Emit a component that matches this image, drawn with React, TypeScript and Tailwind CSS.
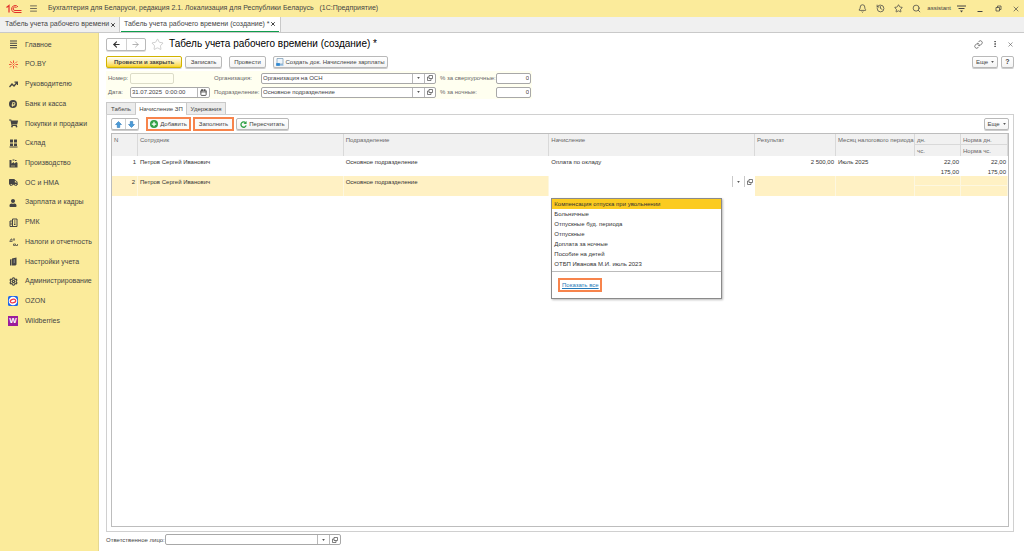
import type { ReactNode } from "react";
import {
  ArrowLeft,
  ArrowRight,
  Bell,
  Calendar,
  EllipsisVertical,
  History,
  Link,
  Menu,
  Search,
  Settings,
  Star,
  X,
} from "lucide-react";
import { FaRubleSign, FaShoppingCart, FaTruck, FaUser } from "react-icons/fa";

const PressButton = ({
  children,
  className = "",
  label,
}: {
  children: ReactNode;
  className?: string;
  label?: string;
}) => (
  <button
    type="button"
    aria-label={label}
    className={`flex h-3 items-center justify-center rounded-[2px] border border-[#b9b9b9] bg-gradient-to-b from-white to-[#f4f4f4] whitespace-nowrap shadow-[0_1px_0_#cccccc] ${className}`}
  >
    {children}
  </button>
);

const Caret = () => (
  <svg viewBox="0 0 4 3" className="h-[2px] w-[3px] shrink-0" fill="#555555">
    <path d="M0 0h4L2 3z" />
  </svg>
);

const OpenIcon = () => (
  <svg viewBox="0 0 12 12" className="h-1.5 w-1.5 shrink-0" fill="none" stroke="#555555" strokeWidth="1.5">
    <path d="M4 1h7v6H4zM4 4H1v7h7V7" />
  </svg>
);

type PickerProps = {
  id: string;
  label: string;
  value: string;
  className?: string;
};

const Picker = ({ id, label, value, className = "" }: PickerProps) => (
  <div className={`flex h-[11px] rounded-[2px] border border-[#a8a8a8] bg-white ${className}`}>
    <input id={id} defaultValue={value} className="min-w-0 flex-1 px-px outline-none" />
    <button
      type="button"
      aria-label={`${label}: выбрать`}
      className="flex w-3 items-center justify-center border-l border-[#b8b8b8]"
    >
      <Caret />
    </button>
    <button
      type="button"
      aria-label={`${label}: открыть`}
      className="flex w-[11px] items-center justify-center border-l border-[#b8b8b8]"
    >
      <OpenIcon />
    </button>
  </div>
);

const Logo = () => (
  <svg viewBox="0 0 32 20" className="h-[10px] w-4" fill="none" stroke="#e2302c">
    <path d="M1 7l5-4v14" strokeWidth="2.500" />
    <path d="M24 6a7 7 0 1 0-6 11h13" strokeWidth="2" />
    <path d="M21 8a3.500 3.500 0 1 0-3 5h13" strokeWidth="2" />
  </svg>
);

const TopBar = () => (
  <header className="flex h-[17px] shrink-0 items-center bg-[#fbeb9b] pr-1 pl-1.5 text-[#444444]">
    <Logo />
    <button type="button" aria-label="Меню" className="ml-[7px]">
      <Menu className="h-[9px] w-[9px]" strokeWidth={2} />
    </button>
    <span className="ml-[10px] flex-1 truncate text-[7px] whitespace-pre">
      Бухгалтерия для Беларуси, редакция 2.1. Локализация для Республики Беларусь   (1С:Предприятие)
    </span>
    <div className="flex items-center gap-[9px]">
      <button type="button" aria-label="Уведомления">
        <Bell className="h-[9px] w-[9px]" />
      </button>
      <button type="button" aria-label="История">
        <History className="h-[9px] w-[9px]" />
      </button>
      <button type="button" aria-label="Избранное">
        <Star className="h-[9px] w-[9px]" />
      </button>
      <button type="button" aria-label="Поиск">
        <Search className="h-[9px] w-[9px]" />
      </button>
    </div>
    <span className="ml-1.5 text-[6px]">assistant</span>
    <button type="button" aria-label="Настройки окна" className="ml-1.5">
      <svg viewBox="0 0 18 16" className="h-2 w-[9px]" fill="none" stroke="#444444" strokeWidth="2">
        <path d="M0 2h18M3 7h12" />
        <path d="M6 11h6l-3 4z" fill="#444444" stroke="none" />
      </svg>
    </button>
    <button type="button" aria-label="Свернуть" className="ml-[11px]">
      <svg viewBox="0 0 14 16" className="h-2 w-[7px]" stroke="#444444" strokeWidth="2">
        <path d="M1 13h10" />
      </svg>
    </button>
    <button type="button" aria-label="Развернуть" className="ml-[11px]">
      <svg viewBox="0 0 14 14" className="h-[7px] w-[7px]" fill="none" stroke="#444444" strokeWidth="1.500">
        <path d="M5 5V2h7v7H9M2 5h7v7H2z" />
      </svg>
    </button>
    <button type="button" aria-label="Закрыть" className="ml-2.5">
      <X className="h-2 w-2" />
    </button>
  </header>
);

const WindowTabs = () => (
  <nav className="flex h-4 shrink-0 border-b border-[#c9c9c9] bg-[#f0f0f0] text-[7px] text-[#444444]">
    <div className="flex w-[120px] items-center justify-between border-r border-[#c9c9c9] pr-[3px] pl-[5px] whitespace-nowrap">
      <a href="#timesheets">Табель учета рабочего времени</a>
      <button type="button" aria-label="Закрыть вкладку">
        <X className="h-1.5 w-1.5" strokeWidth={4} />
      </button>
    </div>
    <div className="flex w-[161px] border-r border-[#c9c9c9] bg-white px-px">
      <div className="flex flex-1 items-center justify-between border-b border-[#0f9d4c] px-[3px] whitespace-nowrap">
        <a href="#new-timesheet">Табель учета рабочего времени (создание) *</a>
        <button type="button" aria-label="Закрыть вкладку">
          <X className="h-1.5 w-1.5" strokeWidth={4} />
        </button>
      </div>
    </div>
  </nav>
);

const sections: { name: string; icon: ReactNode }[] = [
  {
    name: "Главное",
    icon: (
      <svg viewBox="0 0 18 18" className="h-[9px] w-[9px]" stroke="currentColor" strokeWidth="2">
        <path d="M2 2h14M2 6.500h14M2 11h14M2 15.500h14" />
      </svg>
    ),
  },
  {
    name: "РО.BY",
    icon: (
      <svg viewBox="0 0 18 18" className="h-[9px] w-[9px]" stroke="#f0553a" strokeWidth="2" fill="none">
        <path d="M9 1v5M9 12v5M2 3l4 3M13 12l3 3M16 3l-3 3M5 12l-3 3M0 9h5M13 9h5M7 7l4 4M11 7l-4 4" />
      </svg>
    ),
  },
  {
    name: "Руководителю",
    icon: (
      <svg viewBox="0 0 18 18" className="h-[9px] w-[9px]" fill="none" stroke="currentColor" strokeWidth="2.500">
        <path d="M1 14l5-6 4 4 6-7M11 4h6v6" />
      </svg>
    ),
  },
  {
    name: "Банк и касса",
    icon: (
      <span className="flex h-2 w-2 items-center justify-center rounded-full bg-[#444444]">
        <FaRubleSign className="h-[5px] w-[5px] text-[#fbeb9b]" />
      </span>
    ),
  },
  { name: "Покупки и продажи", icon: <FaShoppingCart className="h-[9px] w-[9px]" /> },
  {
    name: "Склад",
    icon: (
      <svg viewBox="0 0 18 18" className="h-[9px] w-[9px]" fill="currentColor">
        <path d="M2 1h6v6H2zM10 1h6v6h-6zM2 9h6v5H2zM10 9h6v5h-6zM1 15h16v2H1z" />
      </svg>
    ),
  },
  {
    name: "Производство",
    icon: (
      <svg viewBox="0 0 18 18" className="h-[9px] w-[9px]" fill="currentColor">
        <path d="M1 17V2h4v7l5-3v3l5-3 2 2v9zM7 1h4v2H7zM12 2h3v2h-3z" />
        <path d="M5 13h2v2H5zM9 13h2v2H9z" fill="#fbeb9b" />
      </svg>
    ),
  },
  { name: "ОС и НМА", icon: <FaTruck className="h-[9px] w-[9px]" /> },
  { name: "Зарплата и кадры", icon: <FaUser className="h-2 w-2" /> },
  {
    name: "РМК",
    icon: (
      <svg viewBox="0 0 18 18" className="h-[9px] w-[9px]" fill="none" stroke="currentColor" strokeWidth="2">
        <path d="M2 6h5v11H2zM7 2h9v15H7zM10 6h3M10 10h3M10 13h3M4 9v5" />
      </svg>
    ),
  },
  {
    name: "Налоги и отчетность",
    icon: (
      <svg viewBox="0 0 18 18" className="h-[9px] w-[9px]" fill="none" stroke="currentColor" strokeWidth="1.500">
        <path d="M1 7h6M2 6l2-4h2v4M8 2h4M10 2v4M9 12v3h4v-3zM14 15h3v-3" />
      </svg>
    ),
  },
  {
    name: "Настройки учета",
    icon: (
      <svg viewBox="0 0 18 18" className="h-[9px] w-[9px]" fill="currentColor">
        <path d="M2 5l3-1v13H2zM6 3l9-2v14l-2 2H6z" />
        <path d="M9 5l3-1v8l-3 1z" fill="#777777" />
      </svg>
    ),
  },
  { name: "Администрирование", icon: <Settings className="h-[9px] w-[9px]" strokeWidth={3} /> },
  {
    name: "OZON",
    icon: (
      <svg viewBox="0 0 20 20" className="h-2.5 w-2.5">
        <rect width="20" height="20" rx="3" fill="#1f66ea" />
        <circle cx="10" cy="10" r="8.500" fill="#ffffff" />
        <ellipse
          cx="10"
          cy="10"
          rx="5.500"
          ry="3.500"
          fill="#ffffff"
          stroke="#f0394a"
          strokeWidth="2.500"
          transform="rotate(-15 10 10)"
        />
      </svg>
    ),
  },
  {
    name: "Wildberries",
    icon: (
      <span className="flex h-2.5 w-2.5 items-center justify-center bg-[#9b1c9b] text-[8px] leading-none font-bold text-white">
        W
      </span>
    ),
  },
];

const Sidebar = () => (
  <aside className="w-[99px] shrink-0 border-r border-[#e5d891] bg-[#fbeb9b] pt-[2px] text-[7px] text-[#444444]">
    <ul className="grid h-[296px] auto-rows-fr">
      {sections.map((section) => (
        <li key={section.name} className="flex items-center">
          <a href="#section" className="flex items-center gap-[7px] pl-2 whitespace-nowrap">
            <span className="flex w-2.5 justify-center">{section.icon}</span>
            {section.name}
          </a>
        </li>
      ))}
    </ul>
  </aside>
);

const FormHeader = () => (
  <div className="flex h-[19px] items-center pt-[3px]">
    <div className="flex h-[13px] w-10 rounded-[2px] border border-[#b9b9b9] bg-white shadow-[0_1px_0_#dddddd]">
      <button type="button" aria-label="Назад" className="flex flex-1 items-center justify-center border-r border-[#d0d0d0]">
        <ArrowLeft className="h-[9px] w-[9px] text-[#333333]" strokeWidth={3} />
      </button>
      <button type="button" aria-label="Вперед" className="flex flex-1 items-center justify-center">
        <ArrowRight className="h-[9px] w-[9px] text-[#999999]" />
      </button>
    </div>
    <button type="button" aria-label="В избранное" className="ml-[5px]">
      <Star className="h-[13px] w-[13px] text-[#aaaaaa]" strokeWidth={1} />
    </button>
    <h1 className="ml-[5px] flex-1 text-[10px] whitespace-nowrap text-black">Табель учета рабочего времени (создание) *</h1>
    <div className="flex items-center gap-2 text-[#555555]">
      <button type="button" aria-label="Ссылка">
        <Link className="h-[9px] w-[9px]" />
      </button>
      <button type="button" aria-label="Еще действия">
        <EllipsisVertical className="h-2 w-2" strokeWidth={3} />
      </button>
      <button type="button" aria-label="Закрыть форму">
        <X className="h-[7px] w-[7px]" />
      </button>
    </div>
  </div>
);

const CommandBar = () => (
  <div className="mt-1 flex items-center">
    <PressButton className="w-[76px] border-[#d1b300] from-[#ffe200] to-[#fbd500] font-bold">Провести и закрыть</PressButton>
    <PressButton className="ml-[3px] w-[37px]">Записать</PressButton>
    <PressButton className="ml-[7px] w-[37px]">Провести</PressButton>
    <PressButton className="ml-[7px] w-[115px] gap-px">
      <svg viewBox="0 0 16 16" className="h-2 w-2 shrink-0" fill="none">
        <path d="M2 1h12v11H2z" fill="#eef5fb" stroke="#7d9db8" strokeWidth="1.500" />
        <path d="M1 11h6v4H1zM7 14h8" fill="#2e87d0" stroke="#2e87d0" strokeWidth="1.500" />
      </svg>
      Создать док. Начисление зарплаты
    </PressButton>
    <PressButton className="ml-auto w-[26px] gap-[3px]">
      Еще <Caret />
    </PressButton>
    <PressButton className="ml-[3px] w-[13px] text-[7px] font-bold" label="Справка">
      ?
    </PressButton>
  </div>
);

const DocumentFields = () => (
  <div className="mt-[3px] grid w-[426px] auto-rows-[14px] grid-cols-[24px_80px_51px_175px_60px_35px] items-center bg-[#fffff0] text-[#666666]">
    <label htmlFor="number" className="pl-[2px]">Номер:</label>
    <input id="number" className="h-[11px] w-11 rounded-[2px] border border-[#dcdcc8] bg-[#fffff0]" />
    <label htmlFor="org" className="pl-1">Организация:</label>
    <Picker id="org" label="Организация" value="Организация на ОСН" className="text-[#444444]" />
    <label htmlFor="overtime" className="pl-1 whitespace-nowrap">% за сверхурочные:</label>
    <input id="overtime" defaultValue="0" className="h-[11px] w-full rounded-[2px] border border-[#a8a8a8] bg-white px-px text-right text-[#444444]" />
    <label htmlFor="date" className="pl-[2px]">Дата:</label>
    <div className="flex h-[11px] rounded-[2px] border border-[#a8a8a8] bg-white text-[#444444]">
      <input id="date" defaultValue="31.07.2025  0:00:00" className="min-w-0 flex-1 px-px outline-none" />
      <button type="button" aria-label="Календарь" className="flex w-3 items-center justify-center border-l border-[#b8b8b8]">
        <Calendar className="h-[7px] w-[7px]" strokeWidth={3} />
      </button>
    </div>
    <label htmlFor="department" className="pl-1 whitespace-nowrap">Подразделение:</label>
    <Picker id="department" label="Подразделение" value="Основное подразделение" className="text-[#444444]" />
    <label htmlFor="night" className="pl-1 whitespace-nowrap">% за ночные:</label>
    <input id="night" defaultValue="0" className="h-[11px] w-full rounded-[2px] border border-[#a8a8a8] bg-white px-px text-right text-[#444444]" />
  </div>
);

const PageTabs = () => (
  <div role="tablist" className="mt-[3px] flex h-3 items-stretch whitespace-nowrap">
    <button type="button" role="tab" aria-selected="false" className="w-[30px] border border-b-0 border-[#c9c9c9] bg-[#ececec]">
      Табель
    </button>
    <button type="button" role="tab" aria-selected="true" className="z-10 -mb-px w-[50px] border-t border-[#c9c9c9] bg-white">
      Начисление ЗП
    </button>
    <button type="button" role="tab" aria-selected="false" className="w-10 border border-b-0 border-[#c9c9c9] bg-[#ececec]">
      Удержания
    </button>
  </div>
);

const TableToolbar = () => (
  <div className="flex h-3.5 items-center">
    <div className="flex h-3 w-7 rounded-[2px] border border-[#b9b9b9] shadow-[0_1px_0_#cccccc]">
      <button type="button" aria-label="Вверх" className="flex flex-1 items-center justify-center border-r border-[#d0d0d0]">
        <svg viewBox="0 0 14 14" className="h-[7px] w-[7px]" fill="#4a9bd8" stroke="#1f6fb0" strokeWidth="1">
          <path d="M7 1l6 6h-3.500v6h-5V7H1z" />
        </svg>
      </button>
      <button type="button" aria-label="Вниз" className="flex flex-1 items-center justify-center">
        <svg viewBox="0 0 14 14" className="h-[7px] w-[7px]" fill="#4a9bd8" stroke="#1f6fb0" strokeWidth="1">
          <path d="M7 13l6-6h-3.500V1h-5v6H1z" />
        </svg>
      </button>
    </div>
    <button
      type="button"
      className="ml-[7px] flex h-3.5 w-[45px] items-center justify-center gap-[2px] border-2 border-[#f7844c] bg-[#fafafa]"
    >
      <svg viewBox="0 0 16 16" className="h-2 w-2 shrink-0">
        <circle cx="8" cy="8" r="8" fill="#2fa044" />
        <path d="M8 3.500v9M3.500 8h9" stroke="#ffffff" strokeWidth="2.500" />
      </svg>
      Добавить
    </button>
    <button type="button" className="ml-[2px] h-3.5 w-[41px] border-2 border-[#f7844c] bg-[#fafafa]">
      Заполнить
    </button>
    <PressButton className="ml-[2px] w-[53px] gap-[2px]">
      <svg viewBox="0 0 16 16" className="h-[7px] w-[7px] shrink-0" fill="none" stroke="#2fa044" strokeWidth="3">
        <path d="M13 4.500A6 6 0 1 0 14 10" />
        <path d="M15 0v7H8z" fill="#2fa044" stroke="none" />
      </svg>
      Пересчитать
    </PressButton>
    <PressButton className="ml-auto w-[25px] gap-[3px]">
      Еще <Caret />
    </PressButton>
  </div>
);

const accruals = [
  "Компенсация отпуска при увольнении",
  "Больничные",
  "Отпускные буд. периода",
  "Отпускные",
  "Доплата за ночные",
  "Пособие на детей",
  "ОТБП Иванова М.И. июль 2023",
];

const AccrualMenu = () => (
  <div className="absolute top-[22px] left-[2px] z-20 w-[171px] border border-[#8a8a8a] bg-white shadow-[1px_1px_2px_#bbbbbb]">
    <ul>
      {accruals.map((name, index) => (
        <li key={name}>
          <button
            type="button"
            className={`block h-2.5 w-full px-[2px] text-left whitespace-nowrap ${index === 0 ? "bg-[#fbcb20]" : ""}`}
          >
            {name}
          </button>
        </li>
      ))}
    </ul>
    <div className="mt-[2px] flex border-t border-[#bbbbbb] px-1.5 pt-1.5 pb-1.5">
      <a
        href="#all"
        className="flex h-3.5 w-11 items-center justify-center border-2 border-[#f7844c] whitespace-nowrap text-[#2479b8] underline"
      >
        Показать все
      </a>
    </div>
  </div>
);

const head = "border-r border-[#d9d9d9] px-[2px] pt-[2px] text-left align-top font-normal text-[#666666]";
const cell = "px-[2px] pt-[2px] align-top";
const active = "border-r border-[#fdf7e0] px-[2px] pt-[2px] align-top";

const AccrualTable = () => (
  <div className="mt-[2px] min-h-0 flex-1 border border-[#bdbdbd] bg-white">
    <table className="w-full table-fixed border-separate border-spacing-0">
      <colgroup>
        <col className="w-[26px]" />
        <col />
        <col />
        <col />
        <col className="w-[81px]" />
        <col className="w-[79px]" />
        <col className="w-[46px]" />
        <col className="w-[47px]" />
      </colgroup>
      <thead className="bg-[#f1f1f1]">
        <tr className="h-[11px]">
          <th rowSpan={2} className={head}>N</th>
          <th rowSpan={2} className={head}>Сотрудник</th>
          <th rowSpan={2} className={head}>Подразделение</th>
          <th rowSpan={2} className={head}>Начисление</th>
          <th rowSpan={2} className={head}>Результат</th>
          <th rowSpan={2} className={`${head} whitespace-nowrap`}>Месяц налогового периода</th>
          <th className={`${head} border-b`}>дн.</th>
          <th className={`${head} border-b`}>Норма дн.</th>
        </tr>
        <tr className="h-[11px]">
          <th className={head}>чс.</th>
          <th className={head}>Норма чс.</th>
        </tr>
      </thead>
      <tbody className="text-[#333333]">
        <tr className="h-2.5">
          <td rowSpan={2} className={`${cell} text-right`}>1</td>
          <td rowSpan={2} className={cell}>Петров Сергей Иванович</td>
          <td rowSpan={2} className={cell}>Основное подразделение</td>
          <td rowSpan={2} className={cell}>Оплата по окладу</td>
          <td rowSpan={2} className={`${cell} text-right`}>2 500,00</td>
          <td rowSpan={2} className={cell}>Июль 2025</td>
          <td className={`${cell} text-right`}>22,00</td>
          <td className={`${cell} text-right`}>22,00</td>
        </tr>
        <tr className="h-2.5">
          <td className={`${cell} text-right`}>175,00</td>
          <td className={`${cell} text-right`}>175,00</td>
        </tr>
        <tr className="h-2.5 bg-[#fff1c4]">
          <td rowSpan={2} className={`${active} text-right`}>2</td>
          <td rowSpan={2} className={active}>Петров Сергей Иванович</td>
          <td rowSpan={2} className={active}>Основное подразделение</td>
          <td rowSpan={2} className="relative bg-white p-0 align-top">
            <div className="flex h-[11px]">
              <input aria-label="Начисление" className="min-w-0 flex-1 px-[2px] outline-none" />
              <button type="button" aria-label="Выбрать начисление" className="flex w-3 items-center justify-center border-l border-[#c9c9c9]">
                <Caret />
              </button>
              <button type="button" aria-label="Открыть начисление" className="flex w-[11px] items-center justify-center border-l border-[#c9c9c9]">
                <OpenIcon />
              </button>
            </div>
            <AccrualMenu />
          </td>
          <td rowSpan={2} className={active}></td>
          <td rowSpan={2} className={active}></td>
          <td className={`${active} border-b`}></td>
          <td className={`${active} border-b`}></td>
        </tr>
        <tr className="h-2.5 bg-[#fff1c4]">
          <td className={active}></td>
          <td className={active}></td>
        </tr>
      </tbody>
    </table>
  </div>
);

const App = () => {
  return (
    <div className="flex h-screen flex-col overflow-hidden bg-white font-['Liberation_Sans',Arial,sans-serif]">
      <TopBar />
      <WindowTabs />
      <div className="flex min-h-0 flex-1">
        <Sidebar />
        <main className="flex min-w-0 flex-1 flex-col pr-2.5 pb-1.5 pl-[7px] text-[6px] leading-[8px] text-[#444444]">
          <FormHeader />
          <CommandBar />
          <DocumentFields />
          <PageTabs />
          <section className="flex min-h-0 flex-1 flex-col border border-[#d0d0d0] px-1 pt-[2px] pb-1">
            <TableToolbar />
            <AccrualTable />
          </section>
          <div className="mt-[2px] flex items-center">
            <label htmlFor="responsible" className="w-[59px] whitespace-nowrap">Ответственное лицо:</label>
            <Picker id="responsible" label="Ответственное лицо" value="" className="w-44" />
          </div>
        </main>
      </div>
    </div>
  );
};

export default App;
